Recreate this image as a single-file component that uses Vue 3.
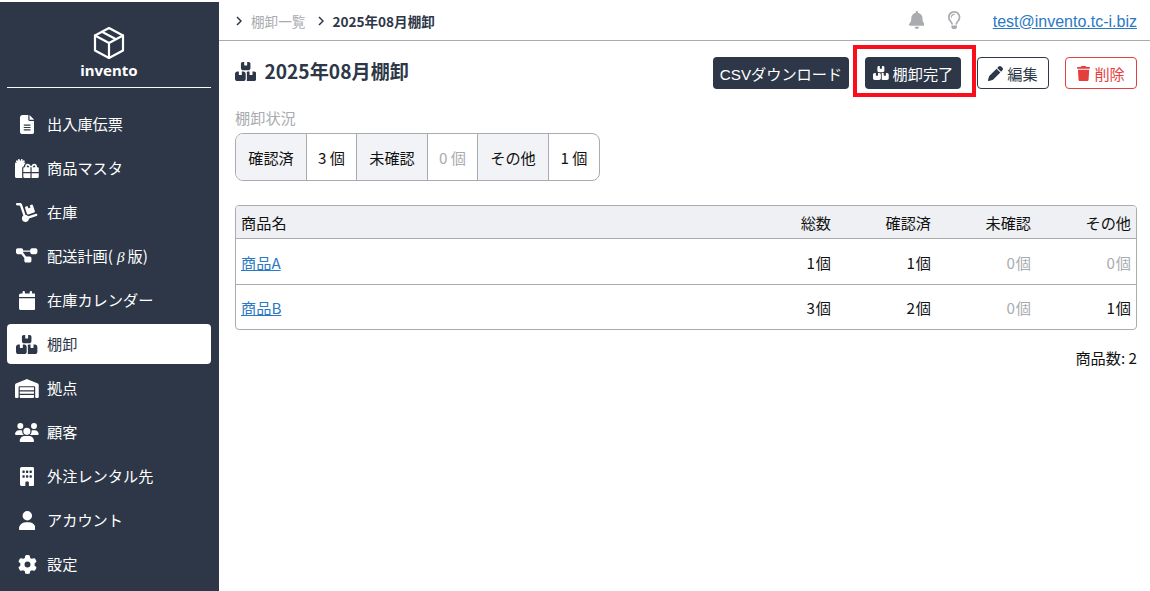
<script setup>
const boxes = { vb: '0 0 576 512', d: 'M248 0h-40c-26.500 0-48 21.500-48 48v112c0 35.300 28.700 64 64 64h128c35.300 0 64-28.700 64-64V48c0-26.500-21.500-48-48-48h-40v80c0 8.800-7.200 16-16 16h-48c-8.800 0-16-7.200-16-16V0zM64 256c-35.300 0-64 28.700-64 64v128c0 35.300 28.700 64 64 64h160c35.300 0 64-28.700 64-64V320c0-35.300-28.700-64-64-64h-40v80c0 8.800-7.200 16-16 16h-48c-8.800 0-16-7.200-16-16v-80H64zm288 256h160c35.300 0 64-28.700 64-64V320c0-35.300-28.700-64-64-64h-40v80c0 8.800-7.200 16-16 16h-48c-8.800 0-16-7.200-16-16v-80h-40c-15 0-28.800 5.100-39.700 13.800 4.900 10.400 7.700 22 7.700 34.200v160c0 12.200-2.800 23.800-7.700 34.200 10.900 8.700 24.700 13.800 39.700 13.800z' }
const nav = [
  { label: '出入庫伝票', vb: '0 0 384 512', d: 'M64 0C28.700 0 0 28.700 0 64V448c0 35.300 28.700 64 64 64H320c35.300 0 64-28.700 64-64V160H256c-17.700 0-32-14.300-32-32V0H64zM256 0V128H384L256 0zM112 256H272c8.800 0 16 7.200 16 16s-7.200 16-16 16H112c-8.800 0-16-7.200-16-16s7.200-16 16-16zm0 64H272c8.800 0 16 7.200 16 16s-7.200 16-16 16H112c-8.800 0-16-7.200-16-16s7.200-16 16-16zm0 64H272c8.800 0 16 7.200 16 16s-7.200 16-16 16H112c-8.800 0-16-7.200-16-16s7.200-16 16-16z' },
  { label: '商品マスタ', vb: '0 0 640 512', d: 'M240.600 194.100c1.900-30.800 17.300-61.200 44-79.800C279.400 103.500 268.700 96 256 96h-29.400l30.700-22c7.200-5.100 8.900-15.100 3.700-22.300l-9.300-13c-5.100-7.200-15.100-8.900-22.300-3.700l-32 22.900 11.500-30.600c3.100-8.300-1.100-17.500-9.400-20.600l-15-5.600c-8.300-3.100-17.500 1.100-20.600 9.400l-19.900 53-19.900-53.100C121 2.100 111.800-2.100 103.500 1l-15 5.600C80.200 9.700 76 19 79.200 27.200l11.500 30.600L58.600 35c-7.200-5.100-17.200-3.500-22.300 3.700l-9.300 13c-5.100 7.200-3.500 17.200 3.700 22.300l30.700 22H32c-17.700 0-32 14.300-32 32v352c0 17.700 14.300 32 32 32h168.900c-5.500-9.500-8.900-20.300-8.900-32V256c0-29.900 20-55 48.600-61.900zM224 480c0 17.700 14.300 32 32 32h160V384H224v96zm224 32h160c17.700 0 32-14.300 32-32v-96H448v128zm160-288h-20.400c2.600-7.600 4.400-15.500 4.400-23.800 0-35.500-27-72.200-72.100-72.200-48.100 0-75.900 47.700-87.900 75.300-12.100-27.600-39.900-75.300-87.900-75.300-45.100 0-72.100 36.700-72.100 72.200 0 8.300 1.700 16.200 4.400 23.800H256c-17.700 0-32 14.300-32 32v96h192V224h15.300l.7-.2.7.2H448v128h192v-96c0-17.700-14.300-32-32-32zm-272 0c-2.700-1.400-5.100-3-7.200-4.800-7.300-6.400-8.800-13.800-8.800-19 0-9.700 6.400-24.200 24.100-24.200 18.700 0 35.600 27.400 44.500 48H336zm199.200-4.800c-2.100 1.800-4.500 3.400-7.200 4.800h-52.600c8.800-20.300 25.800-48 44.500-48 17.700 0 24.100 14.500 24.100 24.200 0 5.200-1.500 12.600-8.800 19z' },
  { label: '在庫', vb: '0 0 576 512', d: 'M0 32C0 14.300 14.300 0 32 0h72.900c27.500 0 52 17.600 60.700 43.800L257.700 320c30.100 .5 56.800 14.900 74 37l202.100-67.400c16.800-5.600 34.900 3.500 40.500 20.200s-3.500 34.900-20.200 40.500L352 417.700c-.9 52.200-43.500 94.300-96 94.300c-53 0-96-43-96-96c0-30.800 14.500-58.200 37-75.800L104.900 64H32C14.300 64 0 49.700 0 32zM244.800 134.500c-5.500-16.800 3.700-34.900 20.500-40.300L311 79.400l19.800 60.900 60.900-19.800L371.800 59.600l45.700-14.800c16.800-5.500 34.900 3.700 40.300 20.500l49.400 152.200c5.500 16.800-3.700 34.900-20.500 40.300L334.500 307.200c-16.800 5.500-34.900-3.700-40.300-20.500L244.800 134.500z' },
  { label: '配送計画', beta: true, vb: '0 0 576 512', d: 'M0 80C0 53.500 21.500 32 48 32h96c26.500 0 48 21.500 48 48V96H384V80c0-26.500 21.500-48 48-48h96c26.500 0 48 21.500 48 48v64c0 26.500-21.500 48-48 48H432c-26.500 0-48-21.500-48-48V128H192v16c0 1.700-.1 3.400-.3 5L272 256h96c26.500 0 48 21.500 48 48v64c0 26.500-21.500 48-48 48H272c-26.500 0-48-21.500-48-48V304c0-1.700 .1-3.400 .3-5L144 192H48c-26.500 0-48-21.500-48-48V80z' },
  { label: '在庫カレンダー', vb: '0 0 448 512', d: 'M96 32V64H48C21.500 64 0 85.500 0 112v48H448V112c0-26.500-21.500-48-48-48H352V32c0-17.700-14.300-32-32-32s-32 14.300-32 32V64H160V32c0-17.700-14.300-32-32-32S96 14.300 96 32zM448 192H0V464c0 26.500 21.500 48 48 48H400c26.500 0 48-21.500 48-48V192z' },
  { label: '棚卸', active: true, ...boxes },
  { label: '拠点', vb: '0 0 640 512', d: 'M0 488V171.300c0-26.200 15.900-49.700 40.200-59.400L308.100 4.800c7.600-3.100 16.100-3.100 23.700 0L599.800 111.900c24.300 9.700 40.200 33.300 40.200 59.400V488c0 13.300-10.700 24-24 24H568c-13.300 0-24-10.700-24-24V224c0-17.700-14.300-32-32-32H128c-17.700 0-32 14.300-32 32V488c0 13.300-10.700 24-24 24H24c-13.300 0-24-10.700-24-24zm488 24H152c-13.300 0-24-10.700-24-24V432H512v56c0 13.300-10.700 24-24 24zM128 400V336H512v64H128zm0-96V224H512v80H128z' },
  { label: '顧客', vb: '0 0 640 512', d: 'M144 0a80 80 0 1 1 0 160A80 80 0 1 1 144 0zM512 0a80 80 0 1 1 0 160A80 80 0 1 1 512 0zM0 298.700C0 239.800 47.800 192 106.700 192h42.700c15.900 0 31 3.500 44.600 9.700c-1.300 7.200-1.900 14.700-1.900 22.300c0 38.200 16.800 72.500 43.300 96c-.2 0-.4 0-.7 0H21.300C9.600 320 0 310.400 0 298.700zM405.300 320c-.2 0-.4 0-.7 0c26.600-23.500 43.300-57.800 43.300-96c0-7.600-.7-15-1.900-22.300c13.600-6.300 28.700-9.700 44.600-9.700h42.700C592.200 192 640 239.800 640 298.700c0 11.800-9.600 21.300-21.300 21.300H405.300zM224 224a96 96 0 1 1 192 0 96 96 0 1 1 -192 0zM128 485.300C128 411.700 187.700 352 261.300 352H378.700C452.300 352 512 411.700 512 485.300c0 14.700-11.900 26.700-26.700 26.700H154.700c-14.700 0-26.700-11.900-26.700-26.700z' },
  { label: '外注レンタル先', vb: '0 0 384 512', d: 'M48 0C21.500 0 0 21.500 0 48V464c0 26.500 21.500 48 48 48h96V432c0-26.500 21.500-48 48-48s48 21.500 48 48v80h96c26.500 0 48-21.500 48-48V48c0-26.500-21.500-48-48-48H48zM64 240c0-8.800 7.200-16 16-16h32c8.800 0 16 7.200 16 16v32c0 8.800-7.200 16-16 16H80c-8.800 0-16-7.200-16-16V240zm112-16h32c8.800 0 16 7.200 16 16v32c0 8.800-7.200 16-16 16H176c-8.800 0-16-7.200-16-16V240c0-8.800 7.200-16 16-16zm80 16c0-8.800 7.200-16 16-16h32c8.800 0 16 7.200 16 16v32c0 8.800-7.200 16-16 16H272c-8.800 0-16-7.200-16-16V240zM80 96h32c8.800 0 16 7.200 16 16v32c0 8.800-7.200 16-16 16H80c-8.800 0-16-7.200-16-16V112c0-8.800 7.200-16 16-16zm80 16c0-8.800 7.200-16 16-16h32c8.800 0 16 7.200 16 16v32c0 8.800-7.200 16-16 16H176c-8.800 0-16-7.200-16-16V112zM272 96h32c8.800 0 16 7.200 16 16v32c0 8.800-7.200 16-16 16H272c-8.800 0-16-7.200-16-16V112c0-8.800 7.200-16 16-16z' },
  { label: 'アカウント', vb: '0 0 448 512', d: 'M224 256A128 128 0 1 0 224 0a128 128 0 1 0 0 256zm-45.700 48C79.800 304 0 383.800 0 482.300C0 498.700 13.300 512 29.700 512H418.300c16.400 0 29.700-13.300 29.700-29.700C448 383.800 368.200 304 269.700 304H178.300z' },
  { label: '設定', vb: '0 0 512 512', d: 'M495.900 166.600c3.200 8.700 .5 18.400-6.400 24.600l-43.300 39.400c1.100 8.300 1.700 16.800 1.700 25.400s-.6 17.100-1.700 25.400l43.300 39.400c6.900 6.200 9.600 15.900 6.400 24.600c-4.400 11.900-9.700 23.300-15.800 34.300l-4.700 8.100c-6.600 11-14 21.400-22.100 31.200c-5.900 7.200-15.700 9.600-24.500 6.800l-55.700-17.700c-13.400 10.300-28.200 18.900-44 25.400l-12.500 57.100c-2 9.100-9 16.300-18.200 17.800c-13.800 2.300-28 3.500-42.500 3.500s-28.700-1.200-42.500-3.500c-9.200-1.500-16.200-8.700-18.200-17.800l-12.500-57.100c-15.800-6.500-30.600-15.100-44-25.400L83.100 425.900c-8.800 2.800-18.600 .3-24.500-6.800c-8.100-9.800-15.500-20.200-22.100-31.200l-4.700-8.100c-6.100-11-11.400-22.400-15.800-34.300c-3.200-8.700-.5-18.400 6.400-24.600l43.300-39.400C64.600 273.100 64 264.600 64 256s.6-17.100 1.700-25.400L22.400 191.200c-6.900-6.200-9.600-15.900-6.400-24.600c4.400-11.900 9.700-23.300 15.800-34.300l4.700-8.100c6.600-11 14-21.400 22.100-31.200c5.900-7.200 15.700-9.600 24.500-6.800l55.700 17.700c13.400-10.300 28.200-18.900 44-25.400l12.500-57.100c2-9.100 9-16.300 18.200-17.800C227.300 1.200 241.500 0 256 0s28.700 1.200 42.500 3.500c9.200 1.500 16.200 8.700 18.200 17.800l12.500 57.100c15.800 6.500 30.600 15.100 44 25.400l55.700-17.700c8.800-2.800 18.600-.3 24.500 6.800c8.100 9.800 15.500 20.200 22.100 31.200l4.700 8.100c6.100 11 11.400 22.400 15.800 34.300zM256 336a80 80 0 1 0 0-160 80 80 0 1 0 0 160z' },
]
const bell = 'M224 0c-17.700 0-32 14.300-32 32V51.200C119 66 64 130.600 64 208v18.800c0 47-17.300 92.400-48.500 127.600l-7.400 8.300c-8.400 9.400-10.400 22.900-5.300 34.400S19.400 416 32 416H416c12.600 0 24-7.400 29.200-18.900s3.100-25-5.300-34.400l-7.400-8.300C401.300 319.200 384 273.900 384 226.800V208c0-77.400-55-142-128-156.800V32c0-17.700-14.300-32-32-32zm45.300 493.300c12-12 18.700-28.300 18.700-45.300H224 160c0 17 6.700 33.300 18.700 45.300s28.300 18.700 45.300 18.700s33.300-6.700 45.300-18.700z'
const bulb = 'M176 80c-52.940 0-96 43.060-96 96 0 8.840 7.160 16 16 16s16-7.160 16-16c0-35.300 28.720-64 64-64 8.840 0 16-7.160 16-16s-7.160-16-16-16zM96.060 459.170c0 3.150.93 6.220 2.680 8.840l24.510 36.840c2.970 4.460 7.970 7.140 13.320 7.140h78.850c5.360 0 10.360-2.680 13.320-7.140l24.510-36.840c1.740-2.620 2.670-5.700 2.680-8.840l.05-43.180H96.020l.04 43.180zM176 0C73.720 0 0 82.970 0 176c0 44.370 16.450 84.850 43.560 115.780 16.640 18.990 42.740 58.800 52.420 92.160v.06h48v-.12c-.01-4.770-.72-9.510-2.150-14.070-5.590-17.810-22.820-64.770-62.170-109.670-20.540-23.430-31.520-53.150-31.610-84.140-.2-73.640 59.670-128 127.950-128 70.580 0 128 57.420 128 128 0 30.970-11.240 60.850-31.650 84.140-39.110 44.610-56.420 91.470-62.100 109.460a47.507 47.507 0 0 0-2.220 14.300v.1h48v-.05c9.680-33.370 35.780-73.180 52.420-92.160C335.550 260.850 352 220.370 352 176 352 78.800 273.200 0 176 0z'
const pen = 'M362.700 19.300L314.300 67.700 444.300 197.700l48.400-48.400c25-25 25-65.500 0-90.500L453.300 19.300c-25-25-65.500-25-90.500 0zm-71 71L58.600 323.500c-10.400 10.400-18 23.300-22.200 37.400L1 481.200C-1.500 489.700 .8 498.800 7 505s15.300 8.500 23.700 6.100l120.300-35.400c14.100-4.200 27-11.800 37.400-22.200L421.700 220.300 291.700 90.300z'
const trash = 'M135.200 17.700L128 32H32C14.300 32 0 46.300 0 64S14.300 96 32 96H416c17.700 0 32-14.300 32-32s-14.300-32-32-32H320l-7.200-14.300C307.400 6.800 296.300 0 284.200 0H163.800c-12.100 0-23.200 6.800-28.600 17.700zM416 128H32L53.200 467c1.600 25.300 22.600 45 47.900 45H346.900c25.300 0 46.300-19.700 47.900-45L416 128z'

const status = [
  { label: '確認済', value: '3', zero: false },
  { label: '未確認', value: '0', zero: true },
  { label: 'その他', value: '1', zero: false },
]
const rows = [
  { name: '商品A', vals: [1, 1, 0, 0] },
  { name: '商品B', vals: [3, 2, 0, 1] },
]
</script>

<template>
  <div class="page">
    <aside class="side">
      <div class="logo">
        <svg class="logo-icon" viewBox="0 0 32 34" fill="none" stroke="currentColor" stroke-width="2.200" stroke-linejoin="round" stroke-linecap="round">
          <path d="M16 2 L30 9.500 V24.500 L16 32 L2 24.500 V9.500 Z" />
          <path d="M2 9.500 L16 17 L30 9.500 M16 17 V32 M9 5.800 L23 13.200" />
        </svg>
        <div class="logo-text">invento</div>
      </div>
      <nav class="nav">
        <a v-for="item in nav" :key="item.label" class="nav-item" :class="{ active: item.active }">
          <span class="nav-icon">
            <svg class="ic" :viewBox="item.vb" fill="currentColor"><path :d="item.d" /></svg>
          </span>
          <span v-if="item.beta">{{ item.label }}(<i class="beta">β</i>版)</span>
          <span v-else>{{ item.label }}</span>
        </a>
      </nav>
    </aside>
    <main class="main">
      <header class="top">
        <div class="crumbs">
          <svg class="chev" viewBox="0 0 6 10" fill="none" stroke="currentColor" stroke-width="1.500"><path d="M1 1 L5 5 L1 9" /></svg>
          <span class="crumb-link">棚卸一覧</span>
          <svg class="chev second" viewBox="0 0 6 10" fill="none" stroke="currentColor" stroke-width="1.500"><path d="M1 1 L5 5 L1 9" /></svg>
          <strong class="crumb-current">2025年08月棚卸</strong>
        </div>
        <div class="top-right">
          <svg class="bell" viewBox="0 0 448 512" fill="currentColor"><path :d="bell" /></svg>
          <svg class="bulb" viewBox="0 0 352 512" fill="currentColor"><path :d="bulb" /></svg>
          <a class="email">test@invento.tc-i.biz</a>
        </div>
      </header>
      <div class="content">
        <div class="title-row">
          <h1 class="title">
            <svg class="title-icon" :viewBox="boxes.vb" fill="currentColor"><path :d="boxes.d" /></svg>
            2025年08月棚卸
          </h1>
          <div class="actions">
            <button class="btn dark">CSVダウンロード</button>
            <div class="highlighted">
              <button class="btn dark">
                <svg class="btn-icon wide" :viewBox="boxes.vb" fill="currentColor"><path :d="boxes.d" /></svg>
                棚卸完了
              </button>
              <span class="mark"></span>
            </div>
            <button class="btn outline">
              <svg class="btn-icon" viewBox="0 0 512 512" fill="currentColor"><path :d="pen" /></svg>
              編集
            </button>
            <button class="btn danger">
              <svg class="btn-icon" viewBox="0 0 448 512" fill="currentColor"><path :d="trash" /></svg>
              削除
            </button>
          </div>
        </div>
        <div class="status-label">棚卸状況</div>
        <div class="status">
          <template v-for="s in status" :key="s.label">
            <div class="st-label">{{ s.label }}</div>
            <div class="st-value" :class="{ zero: s.zero }">{{ s.value }} 個</div>
          </template>
        </div>
        <div class="table-wrap">
          <table class="table">
            <colgroup>
              <col />
              <col class="num-col" />
              <col class="num-col" />
              <col class="num-col" />
              <col class="num-col" />
            </colgroup>
            <thead>
              <tr>
                <th class="left">商品名</th>
                <th>総数</th>
                <th>確認済</th>
                <th>未確認</th>
                <th>その他</th>
              </tr>
            </thead>
            <tbody>
              <tr v-for="r in rows" :key="r.name">
                <td class="left"><a class="link">{{ r.name }}</a></td>
                <td v-for="(v, i) in r.vals" :key="i" :class="{ zero: v === 0 }">{{ v }}<span class="unit">個</span></td>
              </tr>
            </tbody>
          </table>
        </div>
        <div class="count">商品数: 2</div>
      </div>
    </main>
  </div>
</template>

<style>
html, body { margin: 0; background: #fff; }
</style>

<style scoped>
.page {
  display: flex;
  width: 1150px;
  height: 591px;
  overflow: hidden;
  font-family: "Noto Sans CJK JP", "Noto Sans", sans-serif;
  font-size: 15.2px;
  color: #111;
  background: #fff;
}
.side {
  width: 219px;
  flex: none;
  margin-top: 2px;
  background: #2d3748;
  color: #fff;
  padding: 0 8px 0 7px;
  box-sizing: border-box;
}
.logo {
  height: 85px;
  border-bottom: 1px solid #f7fafc;
  display: flex;
  flex-direction: column;
  align-items: center;
}
.logo-icon { width: 32px; height: 34px; margin-top: 24px; }
.logo-text { font-family: "Noto Sans", sans-serif; font-weight: 700; font-size: 15px; line-height: 20px; }
.nav { display: flex; flex-direction: column; gap: 4px; margin-top: 16px; }
.nav-item {
  height: 40px;
  display: flex;
  align-items: center;
  gap: 8px;
  padding-left: 8px;
  border-radius: 4px;
  color: #fff;
  line-height: 1;
}
.nav-item.active { background: #fff; color: #2d3748; }
.nav-icon { width: 24px; display: flex; justify-content: center; flex: none; }
.ic { height: 19px; display: block; }
.beta { margin: 0 3px 0 4px; font-family: "Liberation Serif", serif; }
.main { flex: 1; min-width: 0; }
.top {
  height: 40px;
  border-bottom: 1px solid #a9abaf;
  display: flex;
  align-items: center;
  justify-content: space-between;
  padding: 0 13px 0 17px;
}
.crumbs { display: flex; align-items: center; font-size: 13.6px; color: #2d3748; margin-top: 2px; }
.chev { width: 6px; height: 10px; flex: none; }
.second { margin-left: 13px; }
.crumb-link { color: #a9abaf; margin-left: 9px; }
.crumb-current { margin-left: 8px; font-weight: 700; }
.top-right { display: flex; align-items: center; }
.bell { height: 18px; color: #a9abaf; display: block; margin-right: 24px; }
.bulb { height: 18px; color: #a9abaf; display: block; margin-right: 32px; }
.email { color: #2b78c5; text-decoration: underline; font-family: "Liberation Sans", sans-serif; font-size: 16px; margin-top: 3px; }
.content { padding: 16px 13px 0 16px; }
.title-row { display: flex; align-items: center; justify-content: space-between; height: 32px; }
.title {
  margin: -4px 0 0;
  font-size: 19.2px;
  font-weight: 700;
  color: #2d3748;
  display: flex;
  align-items: center;
  gap: 8px;
}
.title-icon { height: 19px; display: block; }
.actions { display: flex; gap: 16px; }
.highlighted { position: relative; display: flex; }
.mark {
  position: absolute;
  left: -12px;
  top: -12px;
  right: -15px;
  bottom: -8px;
  border: 4px solid #fb0d1b;
  pointer-events: none;
}
.btn {
  height: 32px;
  box-sizing: border-box;
  border: 1px solid transparent;
  border-radius: 4px;
  padding: 0 6px;
  display: flex;
  align-items: center;
  justify-content: center;
  gap: 4px;
  font-family: "Noto Sans CJK JP", "Noto Sans", sans-serif;
  font-size: 15.2px;
  background: #fff;
  white-space: nowrap;
}
.dark { background: #2d3748; color: #fff; }
.outline { border-color: #2d3748; color: #2d3748; width: 72px; }
.danger { border-color: #e53e3e; color: #e53e3e; width: 72px; }
.btn-icon { height: 15px; display: block; }
.btn-icon.wide { height: 14px; }
.highlighted .btn { width: 96px; }
.actions > .btn:first-child { width: 136px; font-family: "Liberation Sans", "Noto Sans CJK JP", sans-serif; }
.status-label { color: #a9abaf; margin-top: 17px; line-height: 22px; }
.status {
  display: inline-flex;
  vertical-align: top;
  margin-top: 5px;
  height: 48px;
  box-sizing: border-box;
  border: 1px solid #a9abaf;
  border-radius: 8px;
  overflow: hidden;
}
.st-label {
  width: 71px;
  box-sizing: border-box;
  background: #f2f3f6;
  display: flex;
  align-items: center;
  justify-content: center;
  border-right: 1px solid #a9abaf;
}
.st-value {
  width: 50px;
  box-sizing: border-box;
  display: flex;
  align-items: center;
  justify-content: center;
  border-right: 1px solid #a9abaf;
}
.st-value:last-child { border-right: 0; }
.zero { color: #a9abaf; }
.table-wrap {
  margin-top: 24px;
  border: 1px solid #a9abaf;
  border-radius: 4px;
  overflow: hidden;
}
.table { width: 100%; border-collapse: collapse; table-layout: fixed; }
.num-col { width: 100px; }
th, td { text-align: right; padding: 0 5px; font-weight: 400; }
th { height: 32px; background: #eff0f3; border-bottom: 1px solid #a9abaf; }
td { height: 45px; border-bottom: 1px solid #a9abaf; }
tbody tr:last-child td { border-bottom: 0; height: 44px; }
th.left, td.left { text-align: left; }
.unit { margin-left: 1px; }
.link { color: #2b78c5; text-decoration: underline; }
.count { text-align: right; margin-top: 16px; }
</style>
